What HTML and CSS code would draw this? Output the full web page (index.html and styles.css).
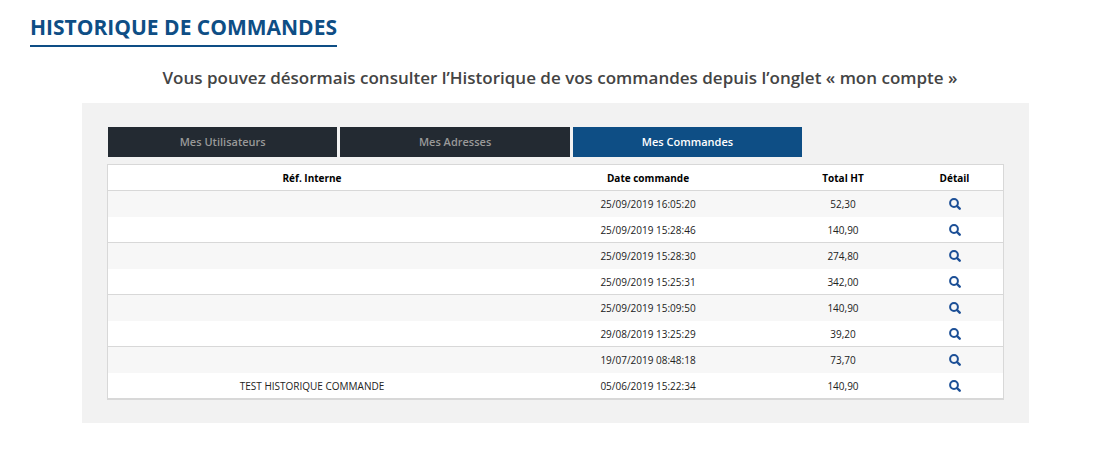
FILE: index.html
```html
<!DOCTYPE html>
<html lang="fr">
<head>
<meta charset="utf-8">
<meta name="viewport" content="width=device-width, initial-scale=1">
<title>Historique de commandes</title>
<link rel="stylesheet" href="styles.css">
</head>
<body>

<svg class="sprite" aria-hidden="true">
	<symbol id="search" viewBox="0 0 12 12">
		<circle cx="5" cy="5" r="3.9" fill="none" stroke="currentColor" stroke-width="2"/>
		<path d="M8 8l2.7 2.7" fill="none" stroke="currentColor" stroke-width="2.4" stroke-linecap="round"/>
	</symbol>
</svg>

<main class="page">
	<h1 class="title">Historique de commandes</h1>
	<p class="intro">Vous pouvez désormais consulter l’Historique de vos commandes depuis l’onglet « mon compte »</p>

	<section class="panel">
		<nav class="tabs">
			<a class="tab" href="#utilisateurs">Mes Utilisateurs</a>
			<a class="tab" href="#adresses">Mes Adresses</a>
			<a class="tab active" href="#commandes" aria-current="page">Mes Commandes</a>
		</nav>

		<table class="orders">
			<thead>
				<tr>
					<th class="ref" scope="col">Réf. Interne</th>
					<th class="date" scope="col">Date commande</th>
					<th class="total" scope="col">Total HT</th>
					<th class="detail" scope="col">Détail</th>
				</tr>
			</thead>
			<tbody>
				<tr>
					<td></td>
					<td>25/09/2019 16:05:20</td>
					<td>52,30</td>
					<td><a class="view" href="#commande-1" aria-label="Détail"><svg><use href="#search"/></svg></a></td>
				</tr>
				<tr>
					<td></td>
					<td>25/09/2019 15:28:46</td>
					<td>140,90</td>
					<td><a class="view" href="#commande-2" aria-label="Détail"><svg><use href="#search"/></svg></a></td>
				</tr>
				<tr>
					<td></td>
					<td>25/09/2019 15:28:30</td>
					<td>274,80</td>
					<td><a class="view" href="#commande-3" aria-label="Détail"><svg><use href="#search"/></svg></a></td>
				</tr>
				<tr>
					<td></td>
					<td>25/09/2019 15:25:31</td>
					<td>342,00</td>
					<td><a class="view" href="#commande-4" aria-label="Détail"><svg><use href="#search"/></svg></a></td>
				</tr>
				<tr>
					<td></td>
					<td>25/09/2019 15:09:50</td>
					<td>140,90</td>
					<td><a class="view" href="#commande-5" aria-label="Détail"><svg><use href="#search"/></svg></a></td>
				</tr>
				<tr>
					<td></td>
					<td>29/08/2019 13:25:29</td>
					<td>39,20</td>
					<td><a class="view" href="#commande-6" aria-label="Détail"><svg><use href="#search"/></svg></a></td>
				</tr>
				<tr>
					<td></td>
					<td>19/07/2019 08:48:18</td>
					<td>73,70</td>
					<td><a class="view" href="#commande-7" aria-label="Détail"><svg><use href="#search"/></svg></a></td>
				</tr>
				<tr>
					<td>TEST HISTORIQUE COMMANDE</td>
					<td>05/06/2019 15:22:34</td>
					<td>140,90</td>
					<td><a class="view" href="#commande-8" aria-label="Détail"><svg><use href="#search"/></svg></a></td>
				</tr>
			</tbody>
		</table>
	</section>
</main>

</body>
</html>
```
FILE: styles.css
```css
* {
	box-sizing: border-box;
}
body {
	margin: 0;
	background: #fff;
	color: #222;
	font-family: "Open Sans", "Noto Sans", sans-serif;
}
.sprite {
	display: none;
}
.page {
	padding: 12px 30px 26px;
}
.title {
	width: fit-content;
	margin: 0;
	padding-bottom: 3px;
	border-bottom: 2px solid #0e4e85;
	color: #0e4e85;
	font-size: 21px;
	font-weight: 700;
	line-height: 30px;
	text-transform: uppercase;
}
.intro {
	margin: 18px 0 13px;
	color: #444;
	font-size: 17px;
	font-weight: 600;
	line-height: 25px;
	text-align: center;
}

/* --------------------------------- */

.panel {
	margin: 0 61px 0 52px;
	padding: 24px 25px 23px;
	background: #f2f2f2;
}
.tabs {
	display: grid;
	grid-template-columns: repeat(3, 1fr);
	gap: 3px;
	width: 77.5%;
	padding-left: 1px;
	margin-bottom: 7px;
}
.tab {
	background: #232a32;
	color: #999;
	font-size: 11px;
	font-weight: 600;
	line-height: 30px;
	text-align: center;
	text-decoration: none;
}
.tab.active {
	background: #0e4e85;
	color: #fff;
}

/* --------------------------------- */

.orders {
	width: 100%;
	border: 1px solid #d8d8d8;
	border-spacing: 0;
	table-layout: fixed;
	background: #fff;
	font-size: 10px;
	line-height: 14px;
	text-align: center;
}
.orders th,
.orders td {
	height: 26px;
	padding: 6px 0;
}
.orders th,
.orders tr:nth-child(even) td {
	padding-bottom: 5px;
	border-bottom: 1px solid #d8d8d8;
}
.orders th {
	color: #000;
	font-weight: 700;
}
.orders tbody tr:nth-child(odd) {
	background: #f7f7f7;
}
.date {
	width: 264px;
}
.total {
	width: 126px;
}
.detail {
	width: 97px;
}
.view {
	display: block;
	color: #1c4f96;
}
.view svg {
	display: block;
	width: 12px;
	height: 12px;
	margin: 1px auto;
}
```
